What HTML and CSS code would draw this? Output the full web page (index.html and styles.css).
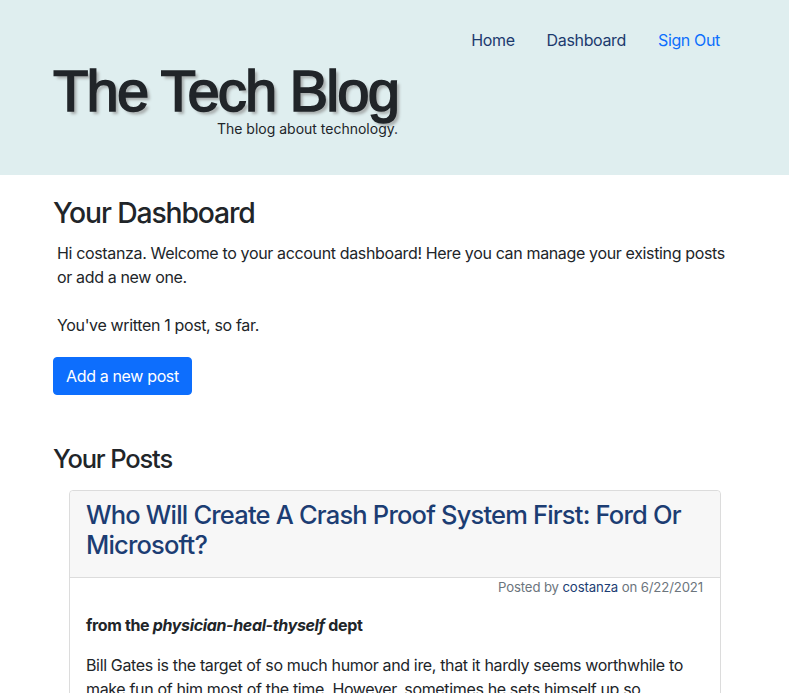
FILE: index.html
```html
<!DOCTYPE html>
<html lang="en">
<head>
<meta charset="utf-8">
<title>The Tech Blog</title>
<link rel="stylesheet" href="styles.css">
</head>
<body>
<header class="site-header">
  <nav class="nav">
    <a class="nav-link" href="#">Home</a>
    <a class="nav-link" href="#">Dashboard</a>
    <a class="nav-link nav-link-active" href="#">Sign Out</a>
  </nav>
  <div class="brand">
    <h1 class="brand-title">The Tech Blog</h1>
    <p class="brand-sub">The blog about technology.</p>
  </div>
</header>
<main class="container">
  <h2 class="section-title">Your Dashboard</h2>
  <div class="intro">
    <p class="intro-text">Hi costanza. Welcome to your account dashboard! Here you can manage your existing posts or add a new one.</p>
    <p class="intro-text intro-last">You've written 1 post, so far.</p>
  </div>
  <a class="btn" href="#">Add a new post</a>
  <h3 class="posts-title">Your Posts</h3>
  <article class="card">
    <div class="card-header">
      <h3 class="card-title">Who Will Create A Crash Proof System First: Ford Or Microsoft?</h3>
    </div>
    <p class="meta">Posted by <a class="meta-link" href="#">costanza</a> on 6/22/2021</p>
    <div class="card-body">
      <p class="dept">from the <em>physician-heal-thyself</em> dept</p>
      <p class="body-text">Bill Gates is the target of so much humor and ire, that it hardly seems worthwhile to make fun of him most of the time. However, sometimes he sets himself up so perfectly that it would be a shame not to take the shot.</p>
    </div>
  </article>
</main>
</body>
</html>
```
FILE: styles.css
```css
* { box-sizing: border-box; }
html, body { margin: 0; padding: 0; }
body {
  font-family: Inter, "Noto Sans", sans-serif;
  font-size: 16px;
  line-height: 1.5;
  letter-spacing: -0.022em;
  color: #212529;
  background: #fff;
}
a { text-decoration: none; }

.site-header {
  background: #dfeeef;
  height: 175px;
  padding: 28px 53px 0 53px;
  display: flex;
  flex-direction: column;
}
.nav {
  display: flex;
  justify-content: flex-end;
}
.nav-link {
  padding: 0 16px;
  color: #1c3a6e;
  line-height: 24px;
}
.nav-link-active { color: #0d6efd; }

.brand {
  display: inline-flex;
  flex-direction: column;
  align-self: flex-start;
  margin-top: 7px;
}
.brand-title {
  margin: 0;
  font-family: "Liberation Sans", Arial, sans-serif;
  font-weight: 400;
  font-size: 58px;
  letter-spacing: -1.9px;
  line-height: 64px;
  color: #212529;
  -webkit-text-stroke: 1.6px #212529;
  text-shadow: 3px 3px 3px #a6abab;
}
.brand-sub {
  margin: -4px 0 0 0;
  align-self: flex-end;
  font-size: 14px;
  line-height: 20px;
  letter-spacing: 0;
}

.container {
  padding: 0 52px 0 53px;
}
.section-title {
  margin: 22px 0 10px 0;
  font-size: 28.3px;
  font-weight: 500;
  line-height: 1.2;
  letter-spacing: -0.04em;
}
.intro { padding: 0 4px; }
.intro-text { margin: 0 0 24px 0; }
.intro-text.intro-last { margin-bottom: 20px; }
.btn {
  display: inline-block;
  background: #0d6efd;
  color: #fff;
  padding: 6px 12px;
  border: 1px solid #0d6efd;
  border-radius: 4px;
  line-height: 24px;
}
.posts-title {
  margin: 49px 0 15px 0;
  font-size: 25.5px;
  font-weight: 500;
  line-height: 1.2;
  letter-spacing: -0.045em;
}

.card {
  margin: 0 16px;
  border: 1px solid #dcdcdc;
  border-radius: 4px;
}
.card-header {
  background: #f7f7f7;
  padding: 9px 16px 8px 16px;
  border-bottom: 1px solid #dcdcdc;
  border-radius: 4px 4px 0 0;
}
.card-title {
  margin: 0 0 8px 0;
  font-size: 25.5px;
  font-weight: 500;
  line-height: 1.2;
  letter-spacing: -0.032em;
  color: #1c3d73;
}
.meta {
  margin: 0;
  padding: 0 17px;
  text-align: right;
  font-size: 13.2px;
  line-height: 19px;
  letter-spacing: -0.01em;
  color: #6c757d;
}
.meta-link { color: #1c3d73; }
.card-body { padding: 16px; }
.dept { margin: 0 0 16px 0; font-weight: 700; }
.body-text { margin: 0; }
```
